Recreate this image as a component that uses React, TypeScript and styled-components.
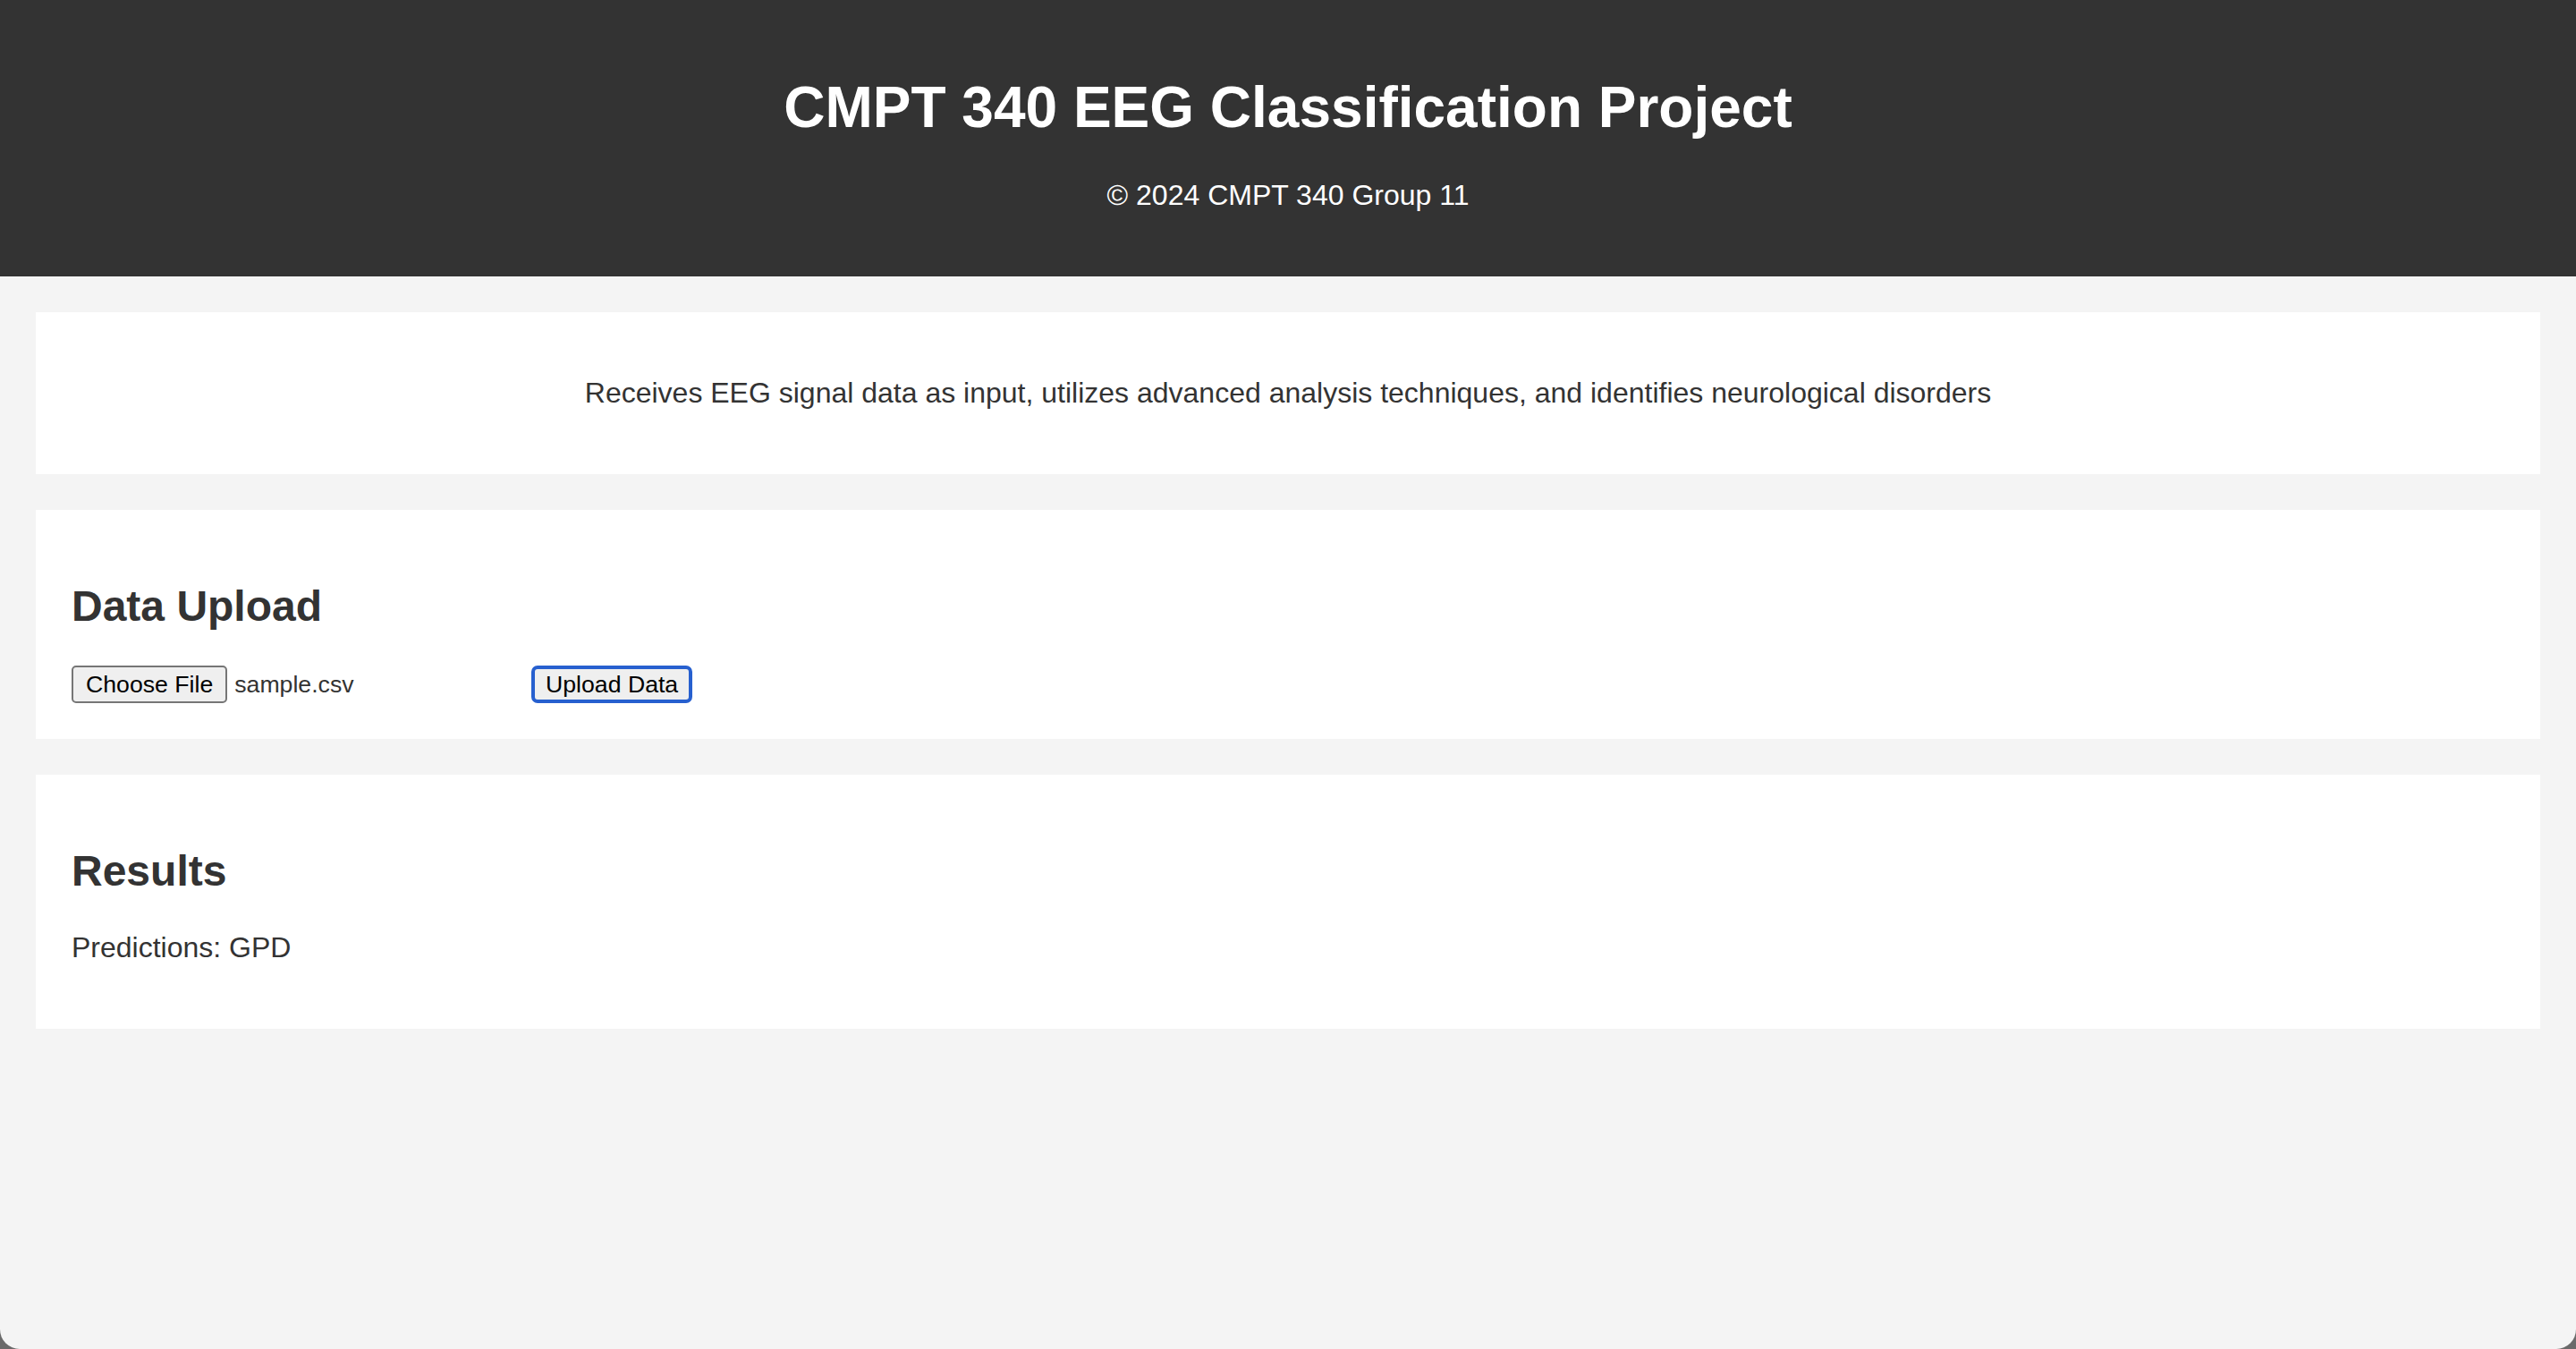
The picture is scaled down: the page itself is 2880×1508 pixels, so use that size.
import React from "react";
import styled, { createGlobalStyle } from "styled-components";

const GlobalStyle = createGlobalStyle`
  html, body {
    margin: 0;
    padding: 0;
    background: #6a6a6a;
  }
  body {
    font-family: "Liberation Sans", Arial, Helvetica, sans-serif;
  }
`;

const Page = styled.div`
  min-height: 1508px;
  background: #f4f4f4;
  color: #333;
  border-radius: 0 0 22px 22px;
  overflow: hidden;
  display: flow-root;
`;

const Header = styled.header`
  background: #333;
  color: #fff;
  padding: 40px 0;
  text-align: center;
`;

const Title = styled.h1`
  font-size: 64px;
  font-weight: bold;
  line-height: normal;
  margin: 42.88px 0;
`;

const Copy = styled.p`
  font-size: 32px;
  line-height: normal;
  margin: 32px 0;
`;

const Section = styled.section<{ $center?: boolean }>`
  margin: 40px;
  padding: 40px;
  background: #fff;
  text-align: ${(p) => (p.$center ? "center" : "left")};
`;

const SectionTitle = styled.h2`
  font-size: 48px;
  font-weight: bold;
  line-height: normal;
  margin: 39.84px 0;
`;

const Text = styled.p`
  font-size: 32px;
  line-height: normal;
  margin: 32px 0;
`;

const Row = styled.form`
  display: flex;
  align-items: center;
  margin: 0;
`;

const FileField = styled.div`
  width: 504px;
  display: flex;
  align-items: center;
  gap: 8px;
`;

const Button = styled.button<{ $focused?: boolean }>`
  box-sizing: border-box;
  height: 42px;
  padding: 0 ${(p) => (p.$focused ? "12px" : "14px")};
  font-family: "Liberation Sans", Arial, Helvetica, sans-serif;
  font-size: 26.67px;
  line-height: 1;
  color: #000;
  background: #efefef;
  border: ${(p) => (p.$focused ? "4px solid #2760cf" : "2px solid #767676")};
  border-radius: ${(p) => (p.$focused ? "7px" : "5px")};
  display: inline-flex;
  align-items: center;
  justify-content: center;
  cursor: default;
`;

const FileName = styled.span`
  font-size: 26.67px;
  color: #333;
`;

const Spacer = styled.div`
  width: 10px;
`;

export default function App() {
  return (
    <>
      <GlobalStyle />
      <Page>
        <Header>
          <Title>CMPT 340 EEG Classification Project</Title>
          <Copy>© 2024 CMPT 340 Group 11</Copy>
        </Header>
        <main>
          <Section $center>
            <Text>
              Receives EEG signal data as input, utilizes advanced analysis techniques, and identifies neurological disorders
            </Text>
          </Section>
          <Section>
            <SectionTitle>Data Upload</SectionTitle>
            <Row onSubmit={(e) => e.preventDefault()}>
              <FileField>
                <Button type="button">Choose File</Button>
                <FileName>sample.csv</FileName>
              </FileField>
              <Spacer />
              <Button type="submit" $focused>
                Upload Data
              </Button>
            </Row>
          </Section>
          <Section>
            <SectionTitle>Results</SectionTitle>
            <Text>Predictions: GPD</Text>
          </Section>
        </main>
      </Page>
    </>
  );
}
